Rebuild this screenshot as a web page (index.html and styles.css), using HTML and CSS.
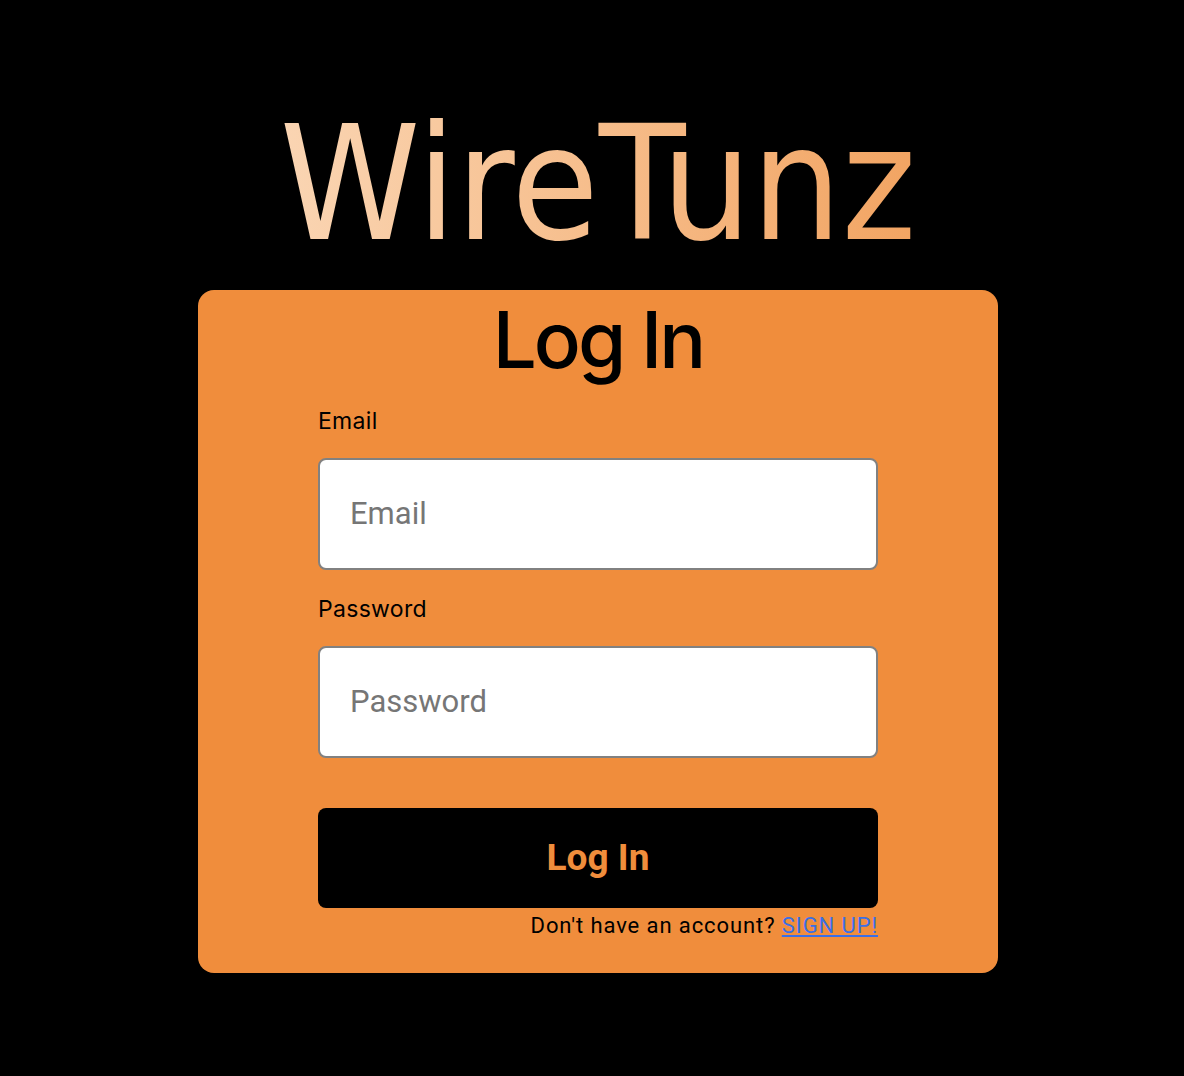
FILE: index.html
```html
<!DOCTYPE html>
<html lang="en">
<head>
<meta charset="utf-8">
<title>WireTunz - Log In</title>
<link rel="stylesheet" href="styles.css">
</head>
<body>
<main class="page">
  <h1 class="brand">WireTunz</h1>
  <section class="card">
    <h2 class="card-title">Log In</h2>
    <form class="form">
      <label class="field-label" for="email">Email</label>
      <input class="field-input" id="email" type="email" placeholder="Email">
      <label class="field-label" for="password">Password</label>
      <input class="field-input" id="password" type="password" placeholder="Password">
      <button class="submit" type="button">Log In</button>
      <p class="signup">Don't have an account? <a class="signup-link" href="#">SIGN UP!</a></p>
    </form>
  </section>
</main>
</body>
</html>
```

FILE: styles.css
```css
html, body {
  margin: 0;
  padding: 0;
  background: #000;
}

.page {
  display: flex;
  flex-direction: column;
  align-items: center;
  padding-top: 92px;
  padding-left: 12px;
}

.brand {
  margin: 0;
  font-family: "DejaVu Sans Condensed", "DejaVu Sans", sans-serif;
  font-weight: normal;
  font-size: 158px;
  line-height: 184px;
  background: linear-gradient(90deg, #fad5b3 0%, #f6bd8b 50%, #f2a462 100%);
  -webkit-background-clip: text;
  background-clip: text;
  color: transparent;
}

.card {
  margin-top: 14px;
  width: 800px;
  box-sizing: border-box;
  background: #f08d3c;
  border-radius: 16px;
  padding: 11px 120px 34px;
  display: flex;
  flex-direction: column;
  align-items: center;
}

.card-title {
  margin: 0;
  font-family: Inter, "Noto Sans", sans-serif;
  font-weight: 500;
  font-size: 78px;
  line-height: 78px;
  letter-spacing: -3px;
  color: #000;
}

.form {
  width: 560px;
  display: flex;
  flex-direction: column;
  margin-top: 27px;
}

.field-label {
  font-family: Inter, "Noto Sans", sans-serif;
  font-size: 23px;
  line-height: 27px;
  letter-spacing: 0.3px;
  color: #000;
  padding-top: 1.5px;
  margin-bottom: 23px;
}

.field-input {
  box-sizing: border-box;
  height: 112px;
  width: 100%;
  border: 2px solid #818181;
  border-radius: 8px;
  background: #fff;
  padding: 0 30px;
  font-family: Roboto, "Noto Sans", sans-serif;
  font-size: 31px;
  color: #000;
  margin: 0 0 24.5px;
  outline: none;
}

.field-input::placeholder {
  color: #767676;
}

.field-input + .field-label + .field-input {
  margin-bottom: 50px;
}

.submit {
  height: 100px;
  width: 100%;
  border: none;
  border-radius: 8px;
  background: #000;
  color: #f08d3c;
  font-family: Roboto, "Noto Sans", sans-serif;
  font-weight: 700;
  font-size: 37px;
  cursor: pointer;
}

.signup {
  margin: 5px 0 0;
  text-align: right;
  font-family: Roboto, "Noto Sans", sans-serif;
  font-size: 22px;
  line-height: 26px;
  letter-spacing: 0.9px;
  color: #000;
}

.signup-link {
  color: #3a6fe6;
  text-decoration: underline;
}
```
